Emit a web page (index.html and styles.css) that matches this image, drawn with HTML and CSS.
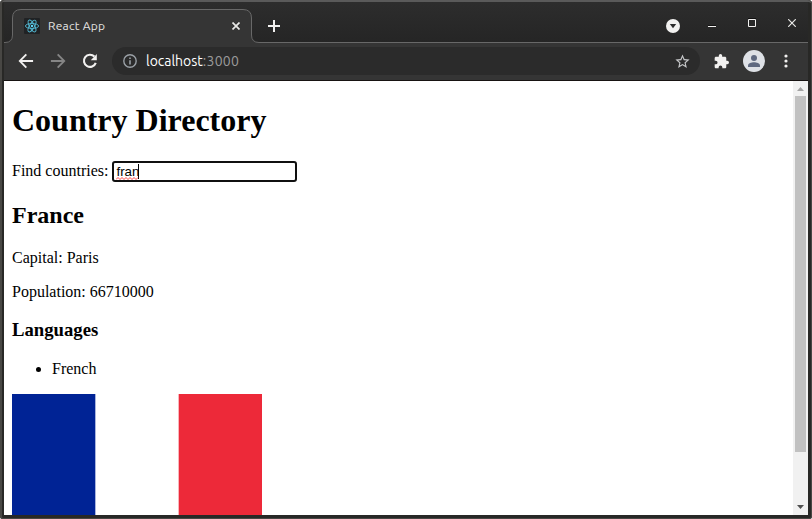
FILE: index.html
```html
<!DOCTYPE html>
<html lang="en">
<head>
<meta charset="utf-8">
<title>React App</title>
<link rel="stylesheet" href="styles.css">
</head>
<body>
<div class="window">
  <header class="tabstrip">
    <svg class="tab-shape" width="804" height="41" viewBox="4 2 804 41" fill="none">
      <path d="M4 43V42.5H6Q12.500 42.500 12.500 35V18Q12.500 9.500 21 9.500H243Q251.500 9.500 251.500 18V35Q251.500 42.500 259 42.500H808V43Z" fill="#353535"/>
      <path d="M4 42.500H5Q12.500 42.500 12.500 35V18Q12.500 9.500 21 9.500H243Q251.500 9.500 251.500 18V35Q251.500 42.500 259 42.500H808" stroke="#686868"/>
    </svg>
    <div class="tab">
      <svg class="favicon" width="16" height="16" viewBox="0 0 16 16" fill="none" stroke="#53b9d3" stroke-width=".9">
        <rect width="16" height="16" rx="1" fill="#202224" stroke="none"/>
        <ellipse cx="8" cy="8" rx="6.600" ry="2.500"/>
        <ellipse cx="8" cy="8" rx="6.600" ry="2.500" transform="rotate(60 8 8)"/>
        <ellipse cx="8" cy="8" rx="6.600" ry="2.500" transform="rotate(120 8 8)"/>
        <circle cx="8" cy="8" r="1.200" fill="#61dafb" stroke="none"/>
      </svg>
      <span class="tab-title">React App</span>
      <svg class="tab-close" width="8" height="8" viewBox="0 0 8 8" stroke="#e8e8e6" stroke-width="1.700"><path d="M.5.5l7 7M7.500.5l-7 7"/></svg>
    </div>
    <svg class="new-tab" width="12" height="12" viewBox="0 0 12 12" stroke="#f2f1f0" stroke-width="2"><path d="M6 0v12M0 6h12"/></svg>
    <div class="window-buttons">
      <svg width="14" height="14" viewBox="0 0 14 14"><circle cx="7" cy="7" r="7" fill="#f2f1f0"/><path d="M3.800 5h6.400L7 9.200z" fill="#2b2b2b"/></svg>
      <svg class="minimize" width="8" height="2" viewBox="0 0 8 2"><path d="M0 0h8v1H0z" fill="#111"/><path d="M0 1h8v1H0z" fill="#f2f1f0"/></svg>
      <svg class="maximize" width="8" height="9" viewBox="0 0 8 9" fill="none"><path d="M0 .5h8" stroke="#111"/><path d="M.5 1.500h7v7h-7z" stroke="#f2f1f0"/></svg>
      <svg class="close" width="8" height="8" viewBox="0 0 8 8" stroke="#e8e8e6" stroke-width="1.200"><path d="M.2.2l7.600 7.600M7.800.2L.2 7.800"/></svg>
    </div>
  </header>
  <nav class="toolbar">
    <svg class="nav-icon" width="20" height="20" viewBox="0 0 24 24" fill="#f2f1f0"><path d="M20.500 10.800H7.300l5.900-5.900L11.600 3.400 3 12l8.600 8.600 1.600-1.500-5.900-5.900h13.200z"/></svg>
    <svg class="nav-icon" width="20" height="20" viewBox="0 0 24 24" fill="#858585"><path d="M3.500 10.800h13.200l-5.900-5.900 1.600-1.500L21 12l-8.600 8.600-1.600-1.500 5.900-5.900H3.500z"/></svg>
    <svg class="nav-icon" width="20" height="20" viewBox="0 0 24 24" fill="none"><path d="M17.300 6.700A7.300 7.300 0 1 0 18.900 14.200" stroke="#f2f1f0" stroke-width="2.500"/><path d="M20.200 3.700V11h-7.300z" fill="#f2f1f0"/></svg>
    <div class="address">
      <svg width="14" height="14" viewBox="0 0 14 14" fill="none" stroke="#9aa0a6" stroke-width="1.400"><circle cx="7" cy="7" r="6.200"/><path d="M7 6.200v4.300M7 3.400v1.500" stroke-width="1.600"/></svg>
      <span class="url"><span class="host">localhost</span><span class="port">:3000</span></span>
      <svg class="star" width="17" height="17" viewBox="0 0 24 24" fill="#c6c7c9"><path d="M22 9.240l-7.190-.62L12 2 9.190 8.630 2 9.240l5.460 4.730L5.820 21 12 17.270 18.180 21l-1.630-7.030L22 9.240zM12 15.400l-3.760 2.270 1-4.280-3.320-2.880 4.380-.38L12 6.100l1.710 4.040 4.380.38-3.320 2.880 1 4.280L12 15.400z"/></svg>
    </div>
    <svg class="extensions" width="15" height="15" viewBox="1 1 22 22" fill="#f2f1f0"><path d="M20.500 11H19V7c0-1.100-.9-2-2-2h-4V3.500a2.500 2.500 0 0 0-5 0V5H4c-1.100 0-2 .9-2 2v3.800h1.500a2.700 2.700 0 0 1 0 5.400H2V20c0 1.100.9 2 2 2h3.800v-1.500a2.700 2.700 0 0 1 5.400 0V22H17c1.100 0 2-.9 2-2v-4h1.500a2.500 2.500 0 0 0 0-5z"/></svg>
    <svg class="avatar" width="22" height="22" viewBox="0 0 22 22"><circle cx="11" cy="11" r="11" fill="#dee1e6"/><g fill="#5f6980"><circle cx="11" cy="8" r="3"/><path d="M5 17v-1.500c0-2.200 3.500-3.300 6-3.300s6 1.100 6 3.300V17z"/></g></svg>
    <svg class="menu" width="4" height="14" viewBox="0 0 4 14" fill="#f2f1f0"><circle cx="2" cy="2" r="1.600"/><circle cx="2" cy="7" r="1.600"/><circle cx="2" cy="12" r="1.600"/></svg>
  </nav>
  <div class="viewport">
    <main class="page">
      <h1>Country Directory</h1>
      <div class="search">
        <span class="label">Find countries:</span>
        <div class="field"><span class="typed">fran<svg class="squiggle" width="23" height="3" viewBox="0 0 23 3" fill="none" stroke="#f33" stroke-width=".9"><path d="M0 2.500l2-2 2 2 2-2 2 2 2-2 2 2 2-2 2 2 2-2 2 2 2-2"/></svg></span><i class="caret"></i></div>
      </div>
      <h2>France</h2>
      <p>Capital: Paris</p>
      <p>Population: 66710000</p>
      <h3>Languages</h3>
      <ul><li>French</li></ul>
      <svg class="flag" width="250" height="167" viewBox="0 0 900 600" preserveAspectRatio="none"><path fill="#fff" d="M0 0h900v600H0z"/><path fill="#002395" d="M0 0h300v600H0z"/><path fill="#ed2939" d="M600 0h300v600H600z"/></svg>
    </main>
    <div class="scrollbar">
      <svg width="7" height="4" viewBox="0 0 7 4" fill="#a3a3a3"><path d="M0 4L3.500 0 7 4z"/></svg>
      <div class="thumb"></div>
      <svg class="down" width="7" height="4" viewBox="0 0 7 4" fill="#505050"><path d="M0 0h7L3.500 4z"/></svg>
    </div>
  </div>
</div>
</body>
</html>
```
FILE: styles.css
```css
* { box-sizing: border-box; }
html, body { margin: 0; height: 100%; overflow: hidden; background: #fff; }
svg { display: block; flex: none; }

.window {
  width: 812px;
  height: 519px;
  display: flex;
  flex-direction: column;
  padding: 2px 4px 4px;
  border-radius: 4px 4px 3px 3px;
  background: #282826;
  box-shadow: inset 2px 0 #484744, inset -1px 0 #484744, inset 0 2px #5a5a5a, inset 0 -1px #484744;
  overflow: hidden;
}

.tabstrip {
  position: relative;
  height: 41px;
  flex: none;
  display: flex;
  align-items: center;
  padding: 7px 12px 0 8px;
  background: linear-gradient(#2d2d2d, #252525);
}
.tab-shape { position: absolute; left: 0; top: 0; }
.tab {
  position: relative;
  width: 240px;
  height: 34px;
  display: flex;
  align-items: center;
  padding: 0 12px;
}
.tab-title {
  margin-left: 8px;
  font: 12px/16px Ubuntu, "Noto Sans", sans-serif;
  letter-spacing: 0.25px;
  color: #e4e4e2;
  flex: 1;
}
.new-tab { position: relative; margin-left: 16px; }
.window-buttons { position: relative; margin-left: auto; display: flex; align-items: center; }
.minimize { margin-left: 28px; }
.maximize { margin: -7px 0 0 32px; }
.close { margin: -6px 0 0 32px; }

.toolbar {
  height: 38px;
  flex: none;
  display: flex;
  align-items: center;
  padding: 0 19px 1px 12px;
  background: #353535;
  border-bottom: 1px solid #171312;
}
.nav-icon { margin-right: 12px; }
.address {
  width: 588px;
  flex: none;
  height: 28px;
  display: flex;
  align-items: center;
  padding: 0 9px 0 11px;
  border-radius: 14px;
  background: #2b2b2b;
}
.url {
  flex: 1;
  margin-left: 9px;
  font: 14px/20px Ubuntu, "Noto Sans", sans-serif;
  color: #9b9b9b;
}
.host { color: #fff; letter-spacing: -0.03px; }
.port { letter-spacing: 0.3px; }
.extensions { margin-left: 14px; }
.avatar { margin-left: 14px; }
.menu { margin-left: 19px; }

.viewport { flex: 1; min-height: 0; display: flex; background: #fff; overflow: hidden; }
.page {
  flex: 1;
  padding: 0 8px;
  font: 16px/18px "Liberation Serif", serif;
  color: #000;
}
h1 { margin: 21px 0 22px; font-size: 32px; line-height: 37px; }
h2 { margin: 20px 0; font-size: 24px; line-height: 27px; }
h3 { margin: 18px 0 20px; font-size: 18.720px; line-height: 21px; }
p { margin: 16px 0; }
ul { margin: 16px 0; padding-left: 40px; }
.search { display: flex; align-items: flex-start; height: 21px; }
.label { padding-top: 1px; }
.field {
  width: 185px;
  height: 21px;
  margin-left: 4px;
  padding: 0 2px;
  display: flex;
  align-items: center;
  border: 2px solid #101010;
  border-radius: 3px;
  font: 13.333px/15px "Liberation Sans", sans-serif;
}
.typed { position: relative; }
.squiggle { position: absolute; left: 0; bottom: -1px; }
.caret { width: 1px; height: 15px; margin-left: -1px; background: #000; }

.scrollbar {
  width: 15px;
  display: flex;
  flex-direction: column;
  align-items: center;
  padding: 6px 0;
  background: #f1f1f1;
}
.thumb { width: 11px; height: 356px; margin-top: 5px; background: #c1c1c1; }
.down { margin-top: auto; }
```
